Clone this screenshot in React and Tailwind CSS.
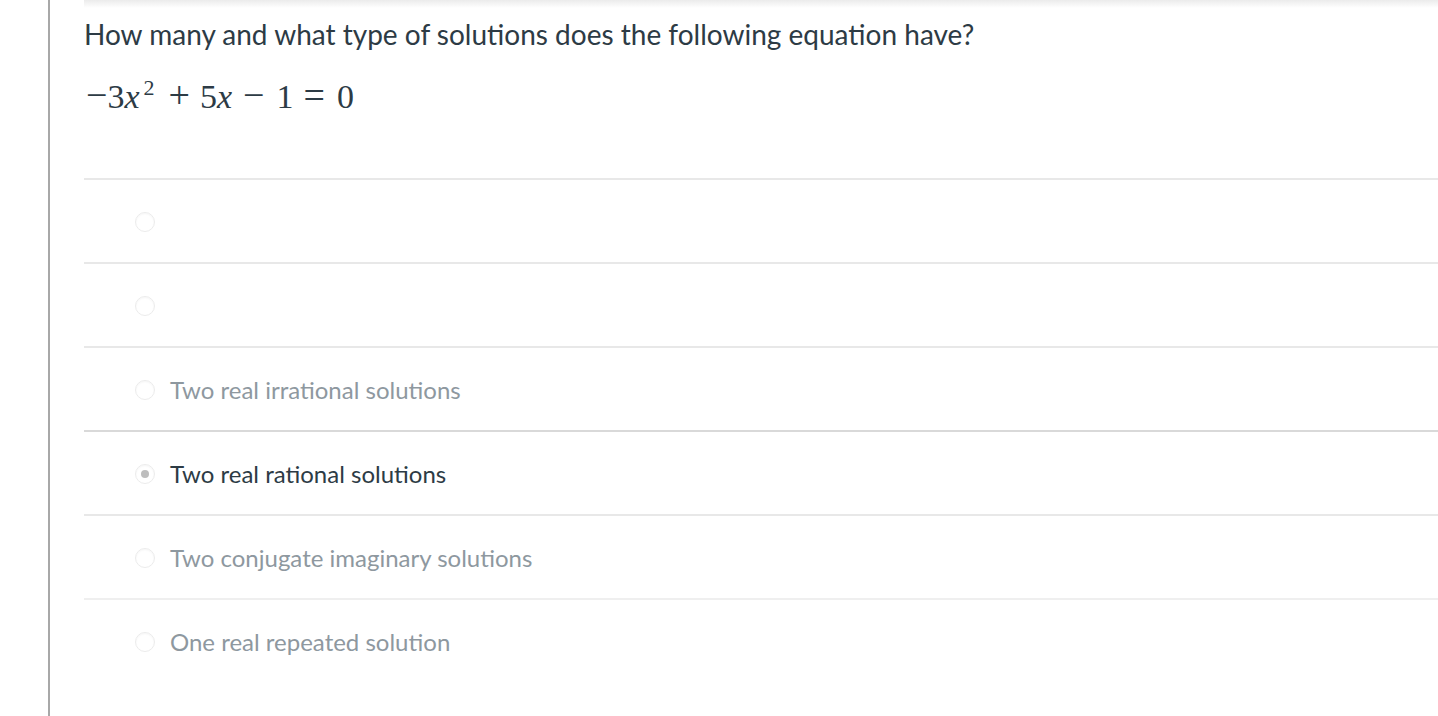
import React from "react";

const options = [
  { text: "", selected: false },
  { text: "", selected: false },
  { text: "Two real irrational solutions", selected: false },
  { text: "Two real rational solutions", selected: true },
  { text: "Two conjugate imaginary solutions", selected: false },
  { text: "One real repeated solution", selected: false },
];

function Radio({ selected }) {
  return (
    <span className="flex h-[20px] w-[20px] shrink-0 items-center justify-center rounded-full border border-[#ececec] bg-white shadow-[inset_0_1px_2px_rgba(0,0,0,0.04)]">
      {selected && <span className="h-[8px] w-[8px] rounded-full bg-[#bdbdbd]" />}
    </span>
  );
}

export default function App() {
  return (
    <div className="flex h-[716px] w-[1438px] overflow-hidden bg-white" style={{ fontFamily: "Lato, 'Noto Sans', sans-serif" }}>
      <div className="w-[48px] shrink-0" />
      <div className="w-[2px] shrink-0 bg-[#a8a8a8]" />
      <div className="flex min-w-0 flex-1 flex-col pl-[34px]">
        <div className="h-[8px] bg-gradient-to-b from-[#ebebeb] to-white" />
        <div className="pt-[8px] text-[28px] leading-[36px] text-[#2d3b45]">
          How many and what type of solutions does the following equation have?
        </div>
        <div
          className="mt-[21px] flex h-[44px] items-baseline pl-[2px] text-[34px] leading-[44px] text-[#2d3b45]"
          style={{ fontFamily: "'Liberation Serif', 'DejaVu Serif', serif" }}
        >
          <span className="text-[38px] leading-[44px]">−</span>
          <span>3</span>
          <span className="italic">x</span>
          <span className="relative -top-[13px] ml-[4px] text-[22px] leading-[22px]">2</span>
          <span className="ml-[14px] text-[38px] leading-[44px]">+</span>
          <span className="ml-[10px]">5</span>
          <span className="italic">x</span>
          <span className="ml-[11px] text-[38px] leading-[44px]">−</span>
          <span className="ml-[12px]">1</span>
          <span className="ml-[10px] text-[38px] leading-[44px]">=</span>
          <span className="ml-[12px]">0</span>
        </div>
        <div className="mt-[61px] flex flex-col">
          {options.map((o, i) => (
            <div
              key={i}
              className={`flex h-[84px] items-center gap-[15px] border-t-2 pt-[2px] pl-[51px] ${
                o.selected ? "border-[#d9d9d9]" : i === 5 ? "border-[#efefef]" : "border-[#e8e8e8]"
              }`}
            >
              <Radio selected={o.selected} />
              <span className={`text-[24px] ${o.selected ? "text-[#2d3b45]" : "text-[#8e989f]"}`}>{o.text}</span>
            </div>
          ))}
        </div>
      </div>
    </div>
  );
}
